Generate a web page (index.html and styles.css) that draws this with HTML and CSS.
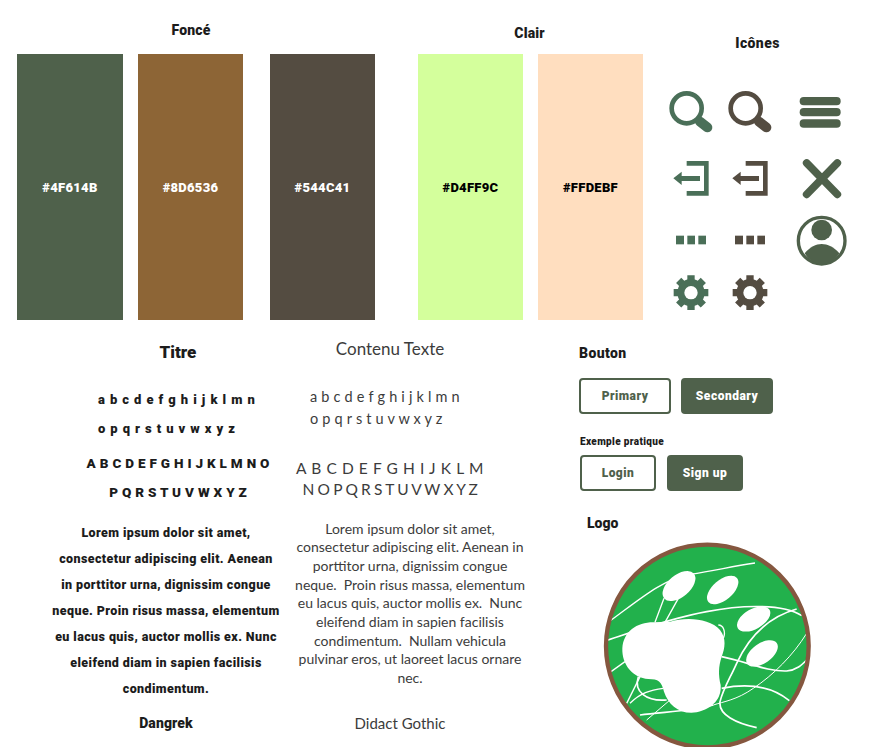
FILE: index.html
```html
<!DOCTYPE html>
<html lang="fr">
<head>
<meta charset="utf-8">
<title>Guide de style</title>
<link rel="stylesheet" href="styles.css">
</head>
<body>
<main class="board">
  <section class="top">
    <div class="palette dark">
      <h2 class="head head-dark">Foncé</h2>
      <div class="swatches">
        <div class="swatch s1">#4F614B</div>
        <div class="swatch s2">#8D6536</div>
        <div class="swatch s3">#544C41</div>
      </div>
    </div>
    <div class="palette light">
      <h2 class="head head-light">Clair</h2>
      <div class="swatches">
        <div class="swatch s4">#D4FF9C</div>
        <div class="swatch s5">#FFDEBF</div>
      </div>
    </div>
    <div class="icons">
      <h2 class="head head-icons">Icônes</h2>
      <svg class="icon-set" viewBox="0 0 630 750" width="210" height="250" aria-hidden="true">
        <defs>
          <g id="search"><circle cx="110" cy="115" r="45" fill="none" stroke="currentColor" stroke-width="14"/><path d="M150 155 172 172" stroke="currentColor" stroke-width="30" stroke-linecap="round"/></g>
          <g id="exit"><path d="M110 280H169V370H110" fill="none" stroke="currentColor" stroke-width="14"/><path d="M70 325 95 305V318H150V333H95V345Z" fill="currentColor"/></g>
          <g id="dots" fill="currentColor"><rect x="78" y="497" width="24" height="26"/><rect x="112" y="497" width="23" height="26"/><rect x="145" y="497" width="23" height="26"/></g>
          <g id="gear">
            <path d="M123 616V720M71 668H175M86 631 160 705M86 705 160 631" stroke="currentColor" stroke-width="22"/>
            <circle cx="123" cy="668" r="41" fill="currentColor"/>
            <circle cx="123" cy="668" r="20" fill="#fff"/>
          </g>
        </defs>
        <g class="ic-green">
          <use href="#search"/><use href="#exit"/><use href="#dots"/><use href="#gear"/>
        </g>
        <g class="ic-brown" transform="translate(177 0)">
          <use href="#search"/><use href="#exit"/><use href="#dots"/><use href="#gear"/>
        </g>
        <g class="ic-olive">
          <rect x="449" y="81" width="123" height="25" rx="12" fill="currentColor"/>
          <rect x="449" y="114" width="123" height="25" rx="12" fill="currentColor"/>
          <rect x="449" y="148" width="123" height="25" rx="12" fill="currentColor"/>
          <path d="M470 279 562 373M562 279 470 373" stroke="currentColor" stroke-width="23" stroke-linecap="round"/>
          <circle cx="515" cy="512" r="70" fill="none" stroke="currentColor" stroke-width="10"/>
          <circle cx="515" cy="480" r="31" fill="currentColor"/>
          <path d="M464 550C480 531 498 522 515 522S552 531 568 550C556 570 535 582 515 582S476 570 464 550Z" fill="currentColor"/>
        </g>
      </svg>
    </div>
  </section>

  <section class="bottom">
    <div class="col-title">
      <h2 class="title-head">Titre</h2>
      <p class="alpha lower">a b c d e f g h i j k l m n<br>o p q r s t u v w x y z</p>
      <p class="alpha upper">A B C D E F G H I J K L M N O<br>P Q R S T U V W X Y Z</p>
      <p class="lorem-title">Lorem ipsum dolor sit amet,<br>consectetur adipiscing elit. Aenean<br>in porttitor urna, dignissim congue<br>neque. Proin risus massa, elementum<br>eu lacus quis, auctor mollis ex. Nunc<br>eleifend diam in sapien facilisis<br>condimentum.</p>
      <p class="font-name">Dangrek</p>
    </div>

    <div class="col-text">
      <h2 class="text-head">Contenu Texte</h2>
      <p class="text-lower">a b c d e f g h i j k l m n<br>o p q r s t u v w x y z</p>
      <p class="text-upper"><span class="upper-a">A B C D E F G H I J K L M</span><span class="upper-b">N O P Q R S T U V W X Y Z</span></p>
      <p class="lorem-text">Lorem ipsum dolor sit amet,<br>consectetur adipiscing elit. Aenean in<br>porttitor urna, dignissim congue<br>neque.  Proin risus massa, elementum<br>eu lacus quis, auctor mollis ex.  Nunc<br>eleifend diam in sapien facilisis<br>condimentum.  Nullam vehicula<br>pulvinar eros, ut laoreet lacus ornare<br>nec.</p>
      <p class="text-name">Didact Gothic</p>
    </div>

    <div class="col-ui">
      <h2 class="ui-head">Bouton</h2>
      <div class="btn-row row-main">
        <button class="btn outline wide">Primary</button>
        <button class="btn solid wide">Secondary</button>
      </div>
      <h3 class="ui-sub">Exemple pratique</h3>
      <div class="btn-row row-example">
        <button class="btn outline narrow">Login</button>
        <button class="btn solid narrow">Sign up</button>
      </div>
      <h2 class="logo-head">Logo</h2>
      <svg class="logo" viewBox="0 0 720 651" width="240" height="217" aria-label="Logo">
        <defs><clipPath id="disc"><circle cx="352" cy="333" r="304"/></clipPath></defs>
        <circle cx="352" cy="333" r="304" fill="#22B14C"/>
        <g clip-path="url(#disc)" fill="none" stroke="#fff" stroke-width="4">
          <path d="M60 258C140 200 220 130 300 118S420 95 495 84"/>
          <path d="M45 318C130 290 240 250 350 230C450 210 580 205 635 242" stroke-width="5"/>
          <path d="M395 365C470 380 530 410 590 408C620 405 635 390 650 375" stroke-width="5"/>
          <path d="M620 222C520 250 470 320 440 385C420 430 400 460 390 500C385 540 440 565 500 578" stroke-width="5"/>
          <path d="M650 295C610 360 550 420 490 460C440 495 400 500 370 510" stroke-width="3"/>
          <path d="M395 460C470 445 540 450 598 497" stroke-width="5"/>
          <path d="M150 540C220 530 300 530 370 510" stroke-width="5"/>
          <path d="M145 425C130 470 170 500 230 495" stroke-width="5"/>
          <path d="M110 505 150 425"/>
          <path d="M120 505C150 475 180 465 220 460"/>
          <path d="M170 555 240 495" stroke-width="3"/>
          <path d="M60 412 105 380"/>
          <path d="M195 262 222 190M225 262 265 190"/>
          <path d="M385 270C400 270 408 290 400 310"/>
        </g>
        <g fill="#fff">
          <ellipse cx="267" cy="153" rx="58" ry="33" transform="rotate(-40 267 153)"/>
          <ellipse cx="398" cy="165" rx="56" ry="30" transform="rotate(-40 398 165)"/>
          <ellipse cx="491" cy="252" rx="55" ry="30" transform="rotate(-30 491 252)"/>
          <ellipse cx="516" cy="355" rx="54" ry="30" transform="rotate(-35 516 355)"/>
          <path d="M97 340C100 290 140 262 190 262L240 260C290 245 360 250 390 285C410 310 405 340 395 365C385 395 385 420 392 450C395 490 370 520 320 532C270 540 235 510 222 470C215 440 205 432 175 432C130 430 95 390 97 340Z"/>
        </g>
        <circle cx="352" cy="333" r="304" fill="none" stroke="#85573F" stroke-width="13"/>
      </svg>
    </div>
  </section>
</main>
</body>
</html>
```

FILE: styles.css
```css
* { box-sizing: border-box; }
html, body { margin: 0; padding: 0; background: #fff; }
body { font-family: "Roboto", "Liberation Sans", sans-serif; color: #1c1c1c; }
h2, h3, p { margin: 0; font-weight: inherit; font-size: inherit; }
.board { width: 879px; height: 747px; overflow: hidden; }

.top { display: flex; height: 335px; padding-left: 17px; }
.palette { display: flex; flex-direction: column; }
.dark { width: 358px; }
.light { width: 226px; margin-left: 43px; }
.head { font-weight: 900; font-size: 14px; line-height: 18px; text-align: center; letter-spacing: .15px; }
.head-dark { height: 54px; padding: 21px 10px 0 0; }
.head-light { height: 54px; padding: 24px 3px 0 0; }
.swatches { display: flex; }
.swatch {
  width: 105px; height: 266px; display: flex; align-items: center; justify-content: center;
  font-weight: 900; font-size: 13px; letter-spacing: .3px; color: #fff;
}
.s1 { background: #4F614B; width: 106px; }
.s2 { background: #8D6536; margin-left: 15px; }
.s3 { background: #544C41; margin-left: 27px; }
.s4 { background: #D4FF9C; color: #000; }
.s5 { background: #FFDEBF; color: #000; margin-left: 15px; }
.icons { margin-left: 6px; width: 210px; display: flex; flex-direction: column; }
.head-icons { height: 70px; padding: 34px 0 0 5px; letter-spacing: .4px; }
.icon-set { display: block; }
.ic-green { color: #4A6F58; }
.ic-brown { color: #544C41; }
.ic-olive { color: #4F614B; }

.bottom { display: flex; height: 412px; }
.col-title { width: 292px; padding-left: 40px; text-align: center; flex: none; }
.title-head { font-weight: 900; font-size: 17px; line-height: 20px; margin-top: 7px; padding-left: 24px; }
.alpha { font-weight: 900; }
.lower { font-size: 13px; line-height: 29px; margin: 23px 0 0 58px; word-spacing: 1px; letter-spacing: .4px; text-align: left; }
.upper { font-size: 13.5px; line-height: 29px; margin-top: 6px; padding-left: 24px; word-spacing: .6px; }
.lorem-title { font-weight: 900; font-size: 12.5px; line-height: 26px; margin-top: 13px; letter-spacing: .4px; }
.font-name { font-weight: 900; font-size: 14px; line-height: 18px; margin-top: 12px; letter-spacing: .1px; }

.col-text { width: 240px; flex: none; font-family: "Lato", "Noto Sans", sans-serif; color: #3c3c3c; }
.text-head { font-size: 17px; line-height: 22px; margin: 3px 0 0 -22px; width: 240px; text-align: center; }
.text-lower { font-size: 14.5px; line-height: 22px; margin: 26px 0 0 18px; letter-spacing: .2px; }
.text-upper { font-size: 15.5px; line-height: 21px; margin: 28px 0 0 -22px; width: 240px; text-align: center; }
.upper-a, .upper-b { display: block; }
.upper-a { letter-spacing: .6px; }
.upper-b { letter-spacing: -.35px; }
.lorem-text { font-size: 14px; line-height: 18.7px; margin: 19.5px 0 0 -2px; width: 240px; white-space: pre-wrap; text-align: center; }
.text-name { font-size: 15px; line-height: 20px; margin: 25px 0 0 -12px; width: 240px; text-align: center; }

.col-ui { padding-left: 47px; flex: 1; }
.ui-head { font-weight: 900; font-size: 14px; line-height: 18px; margin-top: 9px; letter-spacing: .4px; }
.btn-row { display: flex; }
.row-main { gap: 10px; margin-top: 16px; }
.ui-sub { font-weight: 900; font-size: 10px; line-height: 13px; margin: 21px 0 0 1px; letter-spacing: .35px; }
.row-example { gap: 11px; margin: 7px 0 0 1px; }
.btn { height: 36px; border-radius: 4px; border: 2px solid #4F614B; font: 900 12px "Roboto", sans-serif; letter-spacing: .5px; padding: 0; }
.outline { background: #fff; color: #4F614B; }
.solid { background: #4F614B; color: #fff; }
.wide { width: 92px; }
.narrow { width: 76px; }
.logo-head { font-weight: 900; font-size: 14px; line-height: 18px; margin: 23px 0 0 8px; }
.logo { display: block; margin: 3px 0 0 11px; }
```
